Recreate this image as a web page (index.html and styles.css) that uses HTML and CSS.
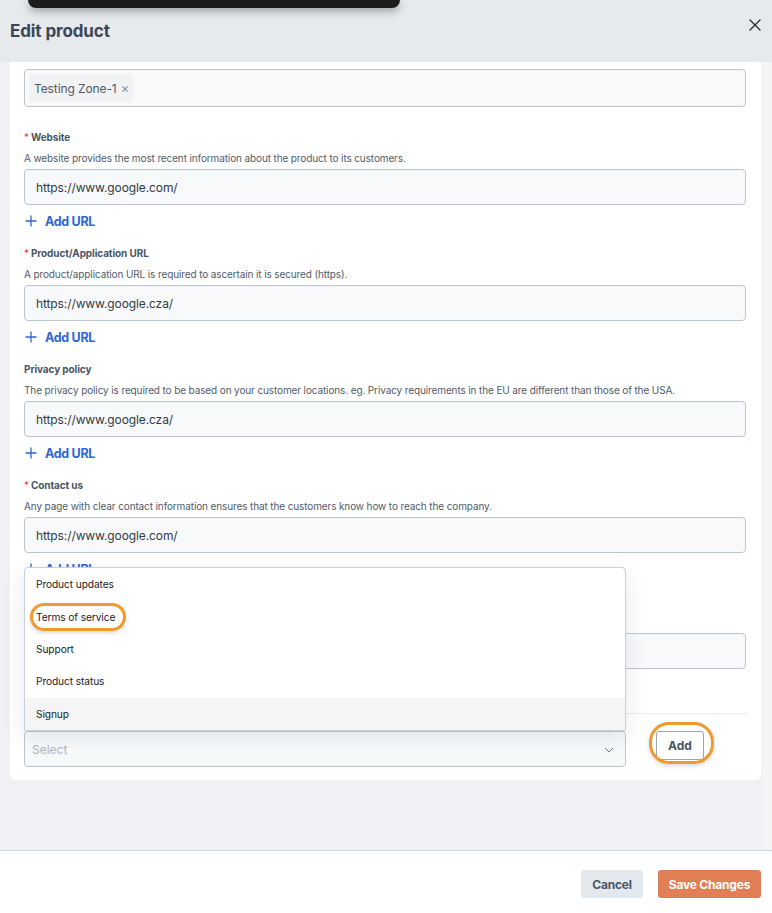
FILE: index.html
```html
<!DOCTYPE html>
<html lang="en">
<head>
<meta charset="utf-8">
<title>Edit product</title>
<link rel="stylesheet" href="styles.css">
</head>
<body>
<div class="modal">
  <div class="toast-bar"></div>
  <header class="modal-header">
    <h1 class="title">Edit product</h1>
    <button class="close" aria-label="Close">
      <svg width="12" height="12" viewBox="0 0 12 12"><path d="M1 1L11 11M11 1L1 11" stroke="#2b2f36" stroke-width="1.4" stroke-linecap="round"/></svg>
    </button>
  </header>
  <div class="modal-body">
    <div class="card">
      <div class="tag-input">
        <span class="tag">Testing Zone-1 <span class="tag-x">×</span></span>
      </div>

      <section class="field first">
        <div class="label"><span class="req">*</span>Website</div>
        <div class="desc">A website provides the most recent information about the product to its customers.</div>
        <div class="input">https://www.google.com/</div>
        <div class="add-url"><span class="plus"><svg width="12" height="12" viewBox="0 0 12 12"><path d="M6 0.5V11.5M0.5 6H11.5" stroke="#2f66d0" stroke-width="1.3"/></svg></span>Add URL</div>
      </section>

      <section class="field">
        <div class="label"><span class="req">*</span>Product/Application URL</div>
        <div class="desc">A product/application URL is required to ascertain it is secured (https).</div>
        <div class="input">https://www.google.cza/</div>
        <div class="add-url"><span class="plus"><svg width="12" height="12" viewBox="0 0 12 12"><path d="M6 0.5V11.5M0.5 6H11.5" stroke="#2f66d0" stroke-width="1.3"/></svg></span>Add URL</div>
      </section>

      <section class="field">
        <div class="label">Privacy policy</div>
        <div class="desc">The privacy policy is required to be based on your customer locations. eg. Privacy requirements in the EU are different than those of the USA.</div>
        <div class="input">https://www.google.cza/</div>
        <div class="add-url"><span class="plus"><svg width="12" height="12" viewBox="0 0 12 12"><path d="M6 0.5V11.5M0.5 6H11.5" stroke="#2f66d0" stroke-width="1.3"/></svg></span>Add URL</div>
      </section>

      <section class="field">
        <div class="label"><span class="req">*</span>Contact us</div>
        <div class="desc">Any page with clear contact information ensures that the customers know how to reach the company.</div>
        <div class="input">https://www.google.com/</div>
        <div class="add-url"><span class="plus"><svg width="12" height="12" viewBox="0 0 12 12"><path d="M6 0.5V11.5M0.5 6H11.5" stroke="#2f66d0" stroke-width="1.3"/></svg></span>Add URL</div>
      </section>

      <section class="field covered">
        <div class="label"></div>
        <div class="desc"></div>
        <div class="input"></div>
        <div class="add-url"></div>
      </section>

      <div class="divider"></div>

      <div class="select-row">
        <div class="select-wrap">
          <ul class="dropdown">
            <li>Product updates</li>
            <li class="marked"><span class="ring-text">Terms of service</span></li>
            <li>Support</li>
            <li>Product status</li>
            <li class="hover">Signup</li>
          </ul>
          <div class="select">
            <span class="placeholder">Select</span>
            <svg class="chev" width="10" height="6" viewBox="0 0 10 6"><path d="M1 1L5 5L9 1" fill="none" stroke="#6b7480" stroke-width="1"/></svg>
          </div>
        </div>
        <div class="add-wrap">
          <button class="add-btn">Add</button>
        </div>
      </div>
    </div>
    <div class="track"></div>
  </div>
  <footer class="modal-footer">
    <button class="btn cancel">Cancel</button>
    <button class="btn save">Save Changes</button>
  </footer>
</div>
</body>
</html>
```

FILE: styles.css
```css
* { box-sizing: border-box; }
html, body { margin: 0; padding: 0; }
body {
  width: 772px;
  height: 913px;
  overflow: hidden;
  font-family: Inter, "Noto Sans", "Liberation Sans", sans-serif;
  color: #3f4a59;
  background: #ffffff;
}
.modal {
  position: relative;
  display: flex;
  flex-direction: column;
  height: 913px;
}
.toast-bar {
  position: absolute;
  left: 28px;
  top: 0;
  width: 372px;
  height: 8px;
  background: #1d1d1d;
  border-radius: 0 0 8px 8px;
  box-shadow: 0 3px 8px rgba(0,0,0,0.35);
  z-index: 5;
}
.modal-header {
  height: 62px;
  background: #e6eaed;
  display: flex;
  align-items: center;
  justify-content: space-between;
  padding: 0 10px 0 10px;
}
.title {
  margin: 0;
  font-size: 17px;
  font-weight: 700;
  color: #3b4757;
  letter-spacing: -0.1px;
}
.close {
  border: 0;
  background: transparent;
  padding: 0;
  width: 12px;
  height: 12px;
  display: flex;
  position: relative;
  top: -6px;
  right: 1px;
}
.modal-body {
  flex: 1;
  display: flex;
  align-items: flex-start;
  background: #eff1f4;
  border-bottom: 1px solid #cdd4db;
  padding-left: 10px;
}
.card {
  width: 751px;
  background: #ffffff;
  border-radius: 0 0 6px 6px;
  padding: 7px 15px 13px 14px;
}
.track {
  width: 11px;
  align-self: stretch;
  background: #f2f4f6;
}
.tag-input {
  height: 38px;
  border: 1px solid #bcc5cf;
  border-radius: 4px;
  background: #f7f9fb;
  padding: 3px 4px;
  display: flex;
  align-items: center;
}
.tag {
  display: inline-flex;
  align-items: center;
  height: 28px;
  padding: 0 4px 0 5px;
  background: #f0f2f4;
  border-radius: 2px;
  font-size: 12px;
  color: #505a68;
  letter-spacing: -0.1px;
}
.tag-x {
  margin-left: 4px;
  font-size: 13px;
  color: #8a929d;
}
.field { margin-top: 15px; }
.field.first { margin-top: 23px; }
.label {
  height: 14px;
  line-height: 14px;
  font-size: 10px;
  font-weight: 700;
  color: #4a5565;
  letter-spacing: -0.1px;
}
.req {
  color: #e0453a;
  margin-right: 2px;
  font-weight: 400;
}
.desc {
  margin-top: 7px;
  height: 14px;
  line-height: 14px;
  font-size: 10px;
  color: #525b69;
  letter-spacing: -0.12px;
  white-space: nowrap;
}
.input {
  margin-top: 4px;
  height: 36px;
  border: 1px solid #bcc5cf;
  border-radius: 4px;
  background: #f7f9fb;
  padding: 0 11px;
  display: flex;
  align-items: center;
  font-size: 12px;
  color: #323a46;
  letter-spacing: -0.1px;
}
.add-url {
  margin-top: 6px;
  height: 20px;
  display: flex;
  align-items: center;
  font-size: 12.5px;
  font-weight: 700;
  color: #2f66d0;
  letter-spacing: -0.3px;
}
.plus {
  display: flex;
  width: 12px;
  height: 12px;
  margin-left: 1px;
  margin-right: 8px;
}
.divider {
  margin-top: 18px;
  height: 1px;
  background: #e8ecef;
}
.select-row {
  margin-top: 17px;
  display: flex;
  align-items: flex-start;
  gap: 30px;
}
.select-wrap {
  position: relative;
  width: 602px;
}
.select {
  height: 36px;
  border: 1px solid #bcc5cf;
  border-radius: 4px;
  background: #f7f9fb;
  display: flex;
  align-items: center;
  justify-content: space-between;
  padding: 0 11px 0 7px;
}
.placeholder {
  font-size: 12px;
  color: #b3b8be;
}
.chev { margin-top: 2px; }
.dropdown {
  position: absolute;
  left: 0;
  right: 0;
  bottom: 100%;
  margin: 0;
  padding: 0;
  list-style: none;
  background: #ffffff;
  border: 1px solid #c8d0d8;
  border-radius: 4px 4px 0 0;
  box-shadow: 0 6px 22px rgba(30,40,60,0.10);
  z-index: 3;
  height: 164px;
  display: flex;
  flex-direction: column;
  justify-content: flex-end;
}
.dropdown li {
  height: 32.4px;
  display: flex;
  align-items: center;
  padding-left: 11px;
  font-size: 10.2px;
  color: #1d2228;
  letter-spacing: -0.1px;
}
.dropdown li.hover { background: #f5f5f5; }
.ring-text {
  position: relative;
}
.ring-text::after {
  content: "";
  position: absolute;
  left: -6px;
  right: -11px;
  top: -8px;
  bottom: -8px;
  border: 3px solid #f0992f;
  border-radius: 14px;
  box-shadow: 0 2px 4px rgba(0,0,0,0.15);
}
.add-wrap {
  position: relative;
}
.add-wrap::after {
  content: "";
  position: absolute;
  left: -7px;
  right: -10px;
  top: -9px;
  bottom: -4px;
  border: 3px solid #f0992f;
  border-radius: 20px;
  box-shadow: 0 2px 4px rgba(0,0,0,0.15);
  pointer-events: none;
}
.add-btn {
  width: 48px;
  height: 29px;
  border: 1px solid #9ca6b2;
  border-radius: 3px;
  background: #ffffff;
  font-family: inherit;
  font-size: 12px;
  font-weight: 700;
  color: #4a5566;
  padding: 0;
}
.modal-footer {
  height: 62px;
  display: flex;
  align-items: center;
  justify-content: flex-end;
  gap: 15px;
  padding: 4px 11px 0 0;
  background: #ffffff;
}
.btn {
  height: 28px;
  border: 0;
  border-radius: 3px;
  font-family: inherit;
  font-size: 12px;
  font-weight: 700;
  letter-spacing: -0.2px;
  padding: 0;
}
.cancel {
  width: 62px;
  background: #e3e8ed;
  color: #4a5566;
}
.save {
  width: 103px;
  background: #e07f55;
  color: #ffffff;
}
```
